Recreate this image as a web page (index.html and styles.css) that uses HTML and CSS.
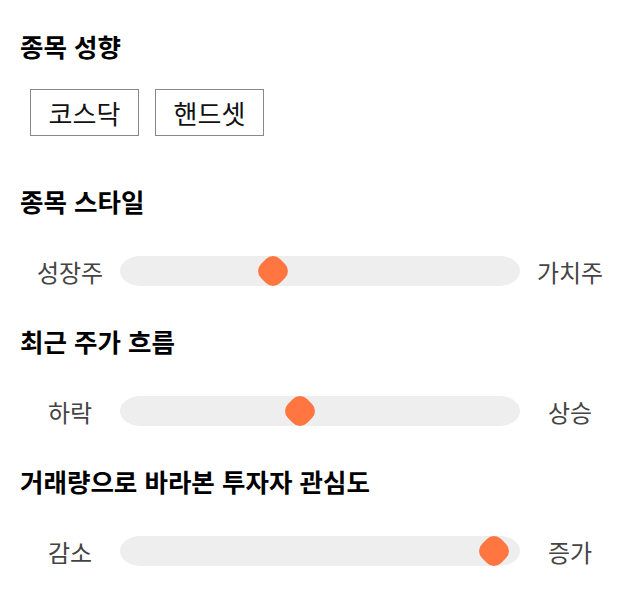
FILE: index.html
```html
<!DOCTYPE html>
<html lang="ko">
<head>
<meta charset="utf-8">
<link rel="stylesheet" href="styles.css">
</head>
<body>
<div class="page">
  <section class="sec sec-first">
    <h3 class="title">종목 성향</h3>
    <div class="chips">
      <button class="chip">코스닥</button>
      <button class="chip">핸드셋</button>
    </div>
  </section>
  <section class="sec">
    <h3 class="title">종목 스타일</h3>
    <div class="row">
      <span class="lbl">성장주</span>
      <div class="track"><span class="thumb" style="left:38.25%"></span></div>
      <span class="lbl">가치주</span>
    </div>
  </section>
  <section class="sec">
    <h3 class="title">최근 주가 흐름</h3>
    <div class="row">
      <span class="lbl">하락</span>
      <div class="track"><span class="thumb" style="left:45%"></span></div>
      <span class="lbl">상승</span>
    </div>
  </section>
  <section class="sec">
    <h3 class="title">거래량으로 바라본 투자자 관심도</h3>
    <div class="row">
      <span class="lbl">감소</span>
      <div class="track"><span class="thumb" style="left:93.5%"></span></div>
      <span class="lbl">증가</span>
    </div>
  </section>
</div>
</body>
</html>
```
FILE: styles.css
```css
html, body {
  margin: 0;
  padding: 0;
  background: #ffffff;
}
body {
  font-family: "Noto Sans CJK KR", "Noto Sans", sans-serif;
  color: #000;
}
.page {
  padding: 31px 20px 0 20px;
  display: flex;
  flex-direction: column;
}
.sec {
  display: flex;
  flex-direction: column;
  gap: 40px;
  margin-bottom: 40px;
}
.sec-first {
  gap: 28px;
  margin-bottom: 50px;
}
.title {
  margin: 0;
  font-size: 25.5px;
  line-height: 30px;
  font-weight: 700;
  color: #000;
}
.chips {
  display: flex;
  gap: 16px;
  padding-left: 10px;
}
.chip {
  width: 109px;
  height: 47px;
  border: 1px solid #888;
  background: #fff;
  font-family: inherit;
  font-size: 26px;
  color: #111;
  padding: 0;
  margin: 0;
}
.row {
  display: flex;
  align-items: center;
  height: 30px;
}
.lbl {
  width: 100px;
  text-align: center;
  font-size: 24px;
  color: #444;
}
.track {
  position: relative;
  width: 400px;
  height: 30px;
  background: #eeeeee;
  border-radius: 20px / 15px;
}
.thumb {
  position: absolute;
  top: 50%;
  width: 27px;
  height: 27px;
  background: #ff7641;
  border-radius: 10px;
  transform: translate(-50%, -50%) rotate(45deg);
}
```
